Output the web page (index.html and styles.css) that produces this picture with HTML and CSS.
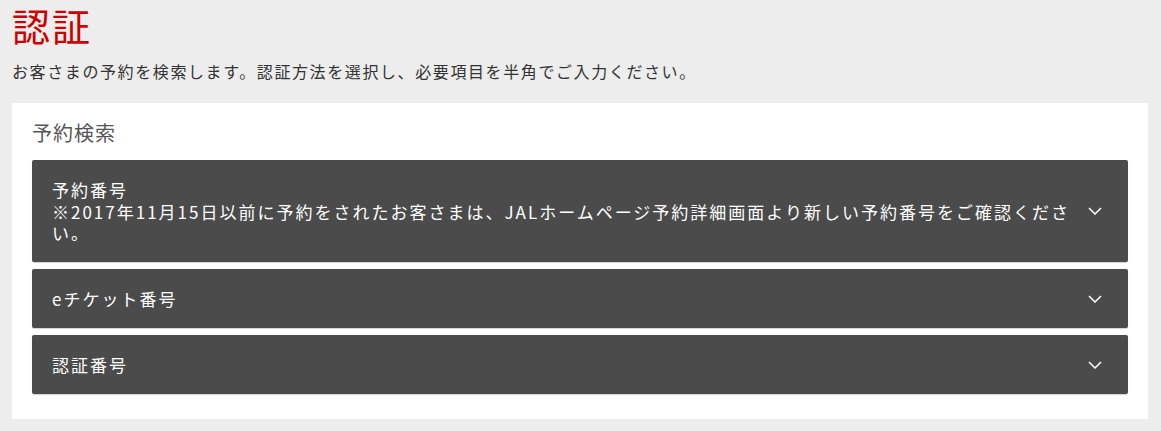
FILE: index.html
```html
<!DOCTYPE html>
<html lang="ja">
<head>
<meta charset="utf-8">
<title>認証</title>
<link rel="stylesheet" href="styles.css">
</head>
<body>
<main class="page">
  <h1 class="title">認証</h1>
  <p class="lead">お客さまの予約を検索します。認証方法を選択し、必要項目を半角でご入力ください。</p>
  <section class="card">
    <h2 class="card-title">予約検索</h2>
    <div class="panel">
      <div class="panel-text"><span class="line">予約番号</span><span class="line">※2017年11月15日以前に予約をされたお客さまは、JALホームページ予約詳細画面より新しい予約番号をご確認ください。</span></div>
      <span class="chev"><svg width="14" height="8" viewBox="0 0 14 8"><polyline points="1,1 7,7 13,1" fill="none" stroke="#fff" stroke-width="1.5"/></svg></span>
    </div>
    <div class="panel">
      <div class="panel-text">eチケット番号</div>
      <span class="chev"><svg width="14" height="8" viewBox="0 0 14 8"><polyline points="1,1 7,7 13,1" fill="none" stroke="#fff" stroke-width="1.5"/></svg></span>
    </div>
    <div class="panel">
      <div class="panel-text">認証番号</div>
      <span class="chev"><svg width="14" height="8" viewBox="0 0 14 8"><polyline points="1,1 7,7 13,1" fill="none" stroke="#fff" stroke-width="1.5"/></svg></span>
    </div>
  </section>
</main>
</body>
</html>
```

FILE: styles.css
```css
html, body {
  margin: 0;
  padding: 0;
  background: #ededed;
}
body {
  font-family: "Noto Sans CJK JP", "Noto Sans", sans-serif;
  color: #333;
}
.page {
  padding: 1px 13px 12px 12px;
}
.title {
  margin: 0;
  font-size: 38px;
  line-height: 48px;
  font-weight: 400;
  color: #cc0000;
  letter-spacing: 2px;
}
.lead {
  margin: 10px 0 0;
  font-size: 16px;
  line-height: 24px;
  letter-spacing: 1.6px;
  color: #333;
}
.card {
  margin-top: 20px;
  background: #fff;
  padding: 18px 20px 25px;
}
.card-title {
  margin: 0 0 15px;
  font-size: 20px;
  line-height: 24px;
  font-weight: 400;
  letter-spacing: 1px;
  color: #555;
}
.panel {
  display: flex;
  align-items: center;
  background: #4b4b4b;
  color: #fff;
  border-radius: 2px;
  box-shadow: 0 1px 1px rgba(0,0,0,0.18);
  padding: 19px 14px 18.5px 20px;
  margin-bottom: 7px;
}
.panel:last-child {
  margin-bottom: 0;
}
.panel-text {
  flex: 1;
  font-size: 17px;
  line-height: 21.5px;
  letter-spacing: 2px;
}
.line {
  display: block;
}
.chev {
  width: 38px;
  display: flex;
  justify-content: center;
  align-items: center;
  flex: none;
}
.chev svg {
  display: block;
}
```
